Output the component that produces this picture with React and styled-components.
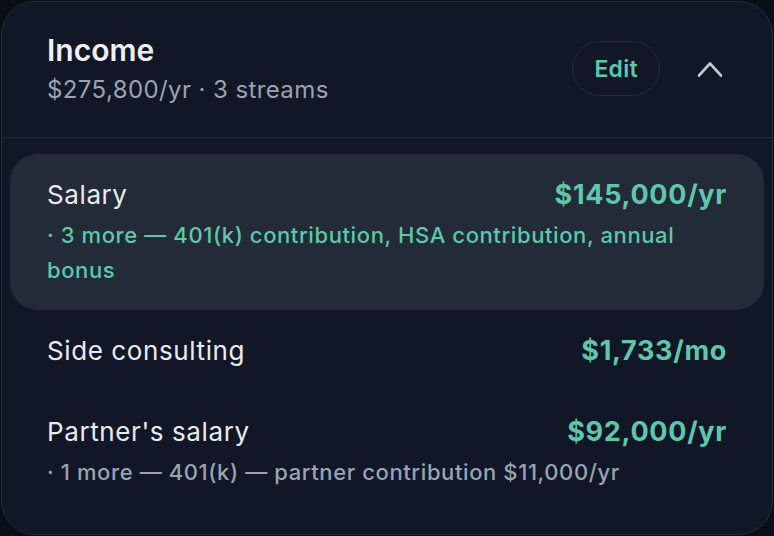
import React from "react";
import styled, { createGlobalStyle } from "styled-components";

const Global = createGlobalStyle`
  html, body { margin: 0; padding: 0; background: #0a0e16; }
  body { font-family: Inter, "Noto Sans", sans-serif; -webkit-font-smoothing: antialiased; }
  * { box-sizing: border-box; }
`;

const Card = styled.section`
  margin: 1px;
  height: calc(100vh - 2px);
  background: #111726;
  border: 1px solid #252c3b;
  border-radius: 34px;
  overflow: hidden;
  display: flex;
  flex-direction: column;
`;

const Header = styled.header`
  display: flex;
  align-items: center;
  justify-content: space-between;
  padding: 29px 49px 31px 45px;
  border-bottom: 1px solid #222a39;
`;

const HeadText = styled.div`
  display: flex;
  flex-direction: column;
  gap: 5px;
`;

const Title = styled.h1`
  margin: 0;
  font-size: 30px;
  line-height: 38px;
  font-weight: 600;
  color: #eef0f5;
`;

const Subtitle = styled.div`
  font-size: 24px;
  line-height: 32px;
  letter-spacing: 0.4px;
  color: #9aa3b2;
`;

const Actions = styled.div`
  display: flex;
  align-items: center;
  gap: 37px;
`;

const EditButton = styled.button`
  height: 55px;
  padding: 0 21px;
  border-radius: 28px;
  border: 1px solid #232b3b;
  background: transparent;
  color: #5fc8aa;
  font-family: inherit;
  font-size: 23px;
  font-weight: 600;
  letter-spacing: 0.3px;
`;

const Chevron = styled.svg`
  width: 26px;
  height: 26px;
  display: block;
`;

const List = styled.div`
  padding: 16px 8px 0 8px;
  display: flex;
  flex-direction: column;
`;

const Row = styled.div`
  padding: 23px 37px 22px 37px;
  border-radius: 28px;
  background: ${(p) => (p.$active ? "#232a38" : "transparent")};
`;

const RowTop = styled.div`
  display: flex;
  justify-content: space-between;
  align-items: baseline;
`;

const Name = styled.div`
  font-size: 26px;
  line-height: 36px;
  letter-spacing: 0.6px;
  color: #e9ebf0;
`;

const Amount = styled.div`
  font-size: 27px;
  line-height: 36px;
  font-weight: 700;
  letter-spacing: 0.7px;
  color: #5fc8aa;
`;

const Detail = styled.div`
  margin-top: 5px;
  font-size: 22px;
  line-height: 35px;
  font-weight: 500;
  letter-spacing: 0.6px;
  color: ${(p) => (p.$accent ? "#5fc8aa" : "#9aa3b2")};
  max-width: 670px;
`;

const rows = [
  {
    name: "Salary",
    amount: "$145,000/yr",
    detail: "· 3 more — 401(k) contribution, HSA contribution, annual bonus",
    accent: true,
    active: true,
  },
  { name: "Side consulting", amount: "$1,733/mo" },
  {
    name: "Partner's salary",
    amount: "$92,000/yr",
    detail: "· 1 more — 401(k) — partner contribution $11,000/yr",
  },
];

export default function App() {
  return (
    <>
      <Global />
      <Card>
        <Header>
          <HeadText>
            <Title>Income</Title>
            <Subtitle>$275,800/yr · 3 streams</Subtitle>
          </HeadText>
          <Actions>
            <EditButton>Edit</EditButton>
            <Chevron viewBox="0 0 26 26" fill="none">
              <path d="M2 19.5 L13 7.5 L24 19.5" stroke="#c3c8d2" strokeWidth="2.6" strokeLinecap="round" strokeLinejoin="round" />
            </Chevron>
          </Actions>
        </Header>
        <List>
          {rows.map((r) => (
            <Row key={r.name} $active={r.active}>
              <RowTop>
                <Name>{r.name}</Name>
                <Amount>{r.amount}</Amount>
              </RowTop>
              {r.detail && <Detail $accent={r.accent}>{r.detail}</Detail>}
            </Row>
          ))}
        </List>
      </Card>
    </>
  );
}
